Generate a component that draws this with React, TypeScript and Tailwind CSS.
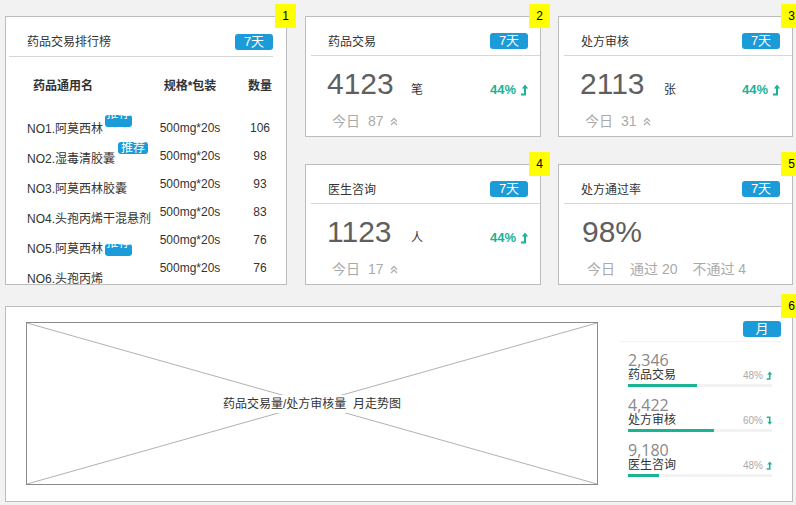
import React from "react";

const Tag = ({ children, className = "" }: { children: React.ReactNode; className?: string }) => (
  <span
    className={`inline-block h-[16px] w-[38px] rounded-[3px] bg-[#1b9bd7] text-center text-[13px] leading-[16px] text-white ${className}`}
  >
    {children}
  </span>
);

const Panel = ({
  n,
  className = "",
  children,
}: {
  n: string;
  className?: string;
  children: React.ReactNode;
}) => (
  <div className={`relative border border-[#bcbcbc] bg-white ${className}`}>
    {children}
    <div className="absolute -right-[10px] -top-[13px] flex h-[24px] w-[21px] items-center justify-center bg-[#ffff00] text-[12px] text-black">
      {n}
    </div>
  </div>
);

const LevelUp = ({ down = false, className = "" }: { down?: boolean; className?: string }) =>
  down ? (
    <svg viewBox="0 0 8 12" className={className} fill="none">
      <path d="M1 1.5H5V8" stroke="currentColor" strokeWidth="2" />
      <path d="M1.8 7.5L5 11.5L8.2 7.5Z" fill="currentColor" />
    </svg>
  ) : (
    <svg viewBox="0 0 8 12" className={className} fill="none">
      <path d="M1 10.5H5V4" stroke="currentColor" strokeWidth="2" />
      <path d="M1.8 4.5L5 0.5L8.2 4.5Z" fill="currentColor" />
    </svg>
  );

const Chevrons = () => (
  <svg viewBox="0 0 8 9" className="h-[9px] w-[8px] text-[#b0b0b0]" fill="none">
    <path d="M1 4.5L4 1.5L7 4.5" stroke="currentColor" strokeWidth="1.3" />
    <path d="M1 8L4 5L7 8" stroke="currentColor" strokeWidth="1.3" />
  </svg>
);

const StatHeader = ({ title }: { title: string }) => (
  <>
    <div className="mt-[16px] flex h-[16px] items-center justify-between pl-[22px] pr-[12px]">
      <span className="translate-y-[1px] text-[12px] leading-[16px] text-[#333]">{title}</span>
      <Tag>7天</Tag>
    </div>
    <div className="ml-[5px] mt-[6px] h-px bg-[#d7d7d7]" />
  </>
);

const StatCard = ({
  n,
  title,
  value,
  unit,
  today,
}: {
  n: string;
  title: string;
  value: string;
  unit: string;
  today: string;
}) => (
  <Panel n={n} className="h-[121px]">
    <StatHeader title={title} />
    <div className="mt-[13px] flex h-[30px] items-baseline pl-[21px] pr-[12px]">
      <span className="w-[84px] text-[30px] leading-[30px] text-[#5f5f5f]">{value}</span>
      <span className="text-[12px] text-[#333]">{unit}</span>
      <span className="ml-auto flex items-center gap-[4px] text-[13px] font-bold text-[#1ab394]">
        44%
        <LevelUp className="h-[12px] w-[8px]" />
      </span>
    </div>
    <div className="mt-[12px] flex h-[20px] items-center pl-[26px] text-[14px] text-[#aaa]">
      <span>今日</span>
      <span className="ml-[8px]">{today}</span>
      <span className="ml-[6px]">
        <Chevrons />
      </span>
    </div>
  </Panel>
);

const rankNames = [
  "NO1.阿莫西林",
  "NO2.湿毒清胶囊",
  "NO3.阿莫西林胶囊",
  "NO4.头孢丙烯干混悬剂",
  "NO5.阿莫西林",
  "NO6.头孢丙烯",
];
const rankCounts = ["106", "98", "93", "83", "76", "76"];

const monthly = [
  { value: "2,346", label: "药品交易", pct: 48, down: false, width: "48%" },
  { value: "4,422", label: "处方审核", pct: 60, down: true, width: "60%" },
  { value: "9,180", label: "医生咨询", pct: 48, down: false, width: "21.5%" },
];

export default function App() {
  return (
    <div className="relative h-[505px] w-[796px] overflow-hidden bg-[#f2f2f2] pl-[5px] pt-[16px] font-['Liberation_Sans','Noto_Sans_CJK_SC',sans-serif]">
      <div className="flex gap-[18px]">
        {/* ranking */}
        <Panel n="1" className="h-[269px] w-[282px]">
          <div className="h-full overflow-hidden">
            <div className="mt-[17px] flex h-[16px] items-center justify-between pl-[21px] pr-[13px]">
              <span className="text-[12px] leading-[16px] text-[#333]">药品交易排行榜</span>
              <Tag>7天</Tag>
            </div>
            <div className="ml-[3px] mr-[13px] mt-[6px] h-px bg-[#d7d7d7]" />
            <div className="mt-[19px] flex h-[20px] items-center pl-[21px] text-[12px] font-bold text-[#333]">
              <span className="w-[123px] pl-[6px]">药品通用名</span>
              <span className="w-[80px] text-center">规格*包装</span>
              <span className="ml-[10px] w-[40px] text-center">数量</span>
            </div>
            <div className="mt-[18px] flex pl-[21px] text-[12px] text-[#333]">
              <div className="w-[123px]">
                {rankNames.map((name, i) => (
                  <div key={i} className="relative h-[30px] whitespace-nowrap leading-[30px]">
                    {name}
                    {i === 0 && (
                      <span className="absolute left-[78px] top-[1px] h-[12px] w-[27px] rounded-[3px] bg-[#1b9bd7] text-center text-[12px] leading-[12px] text-white">
                        <span className="block -translate-y-[7px]">推荐</span>
                      </span>
                    )}
                    {i === 1 && (
                      <span className="absolute -top-[2px] left-[91px] h-[12px] w-[30px] rounded-[3px] bg-[#1b9bd7] text-center text-[12px] leading-[12px] text-white">
                        推荐
                      </span>
                    )}
                    {i === 4 && (
                      <span className="absolute left-[78px] top-[10px] h-[12px] w-[27px] rounded-[3px] bg-[#1b9bd7] text-center text-[12px] leading-[12px] text-white">
                        <span className="block -translate-y-[7px]">推荐</span>
                      </span>
                    )}
                  </div>
                ))}
              </div>
              <div className="w-[80px]">
                {rankCounts.map((_, i) => (
                  <div key={i} className="h-[28px] text-center leading-[28px]">
                    500mg*20s
                  </div>
                ))}
              </div>
              <div className="ml-[10px] w-[40px]">
                {rankCounts.map((c, i) => (
                  <div key={i} className="h-[28px] text-center leading-[28px]">
                    {c}
                  </div>
                ))}
              </div>
            </div>
          </div>
        </Panel>

        <div className="grid grid-cols-[236px_235px] gap-x-[17px] gap-y-[27px]">
          <StatCard n="2" title="药品交易" value="4123" unit="笔" today="87" />
          <StatCard n="3" title="处方审核" value="2113" unit="张" today="31" />
          <StatCard n="4" title="医生咨询" value="1123" unit="人" today="17" />
          <Panel n="5" className="h-[121px]">
            <StatHeader title="处方通过率" />
            <div className="mt-[13px] h-[30px] pl-[23px] text-[30px] leading-[30px] text-[#5f5f5f]">98%</div>
            <div className="mt-[12px] flex h-[20px] items-center gap-[15px] pl-[28px] text-[14px] text-[#aaa]">
              <span>今日</span>
              <span>通过 20</span>
              <span>不通过 4</span>
            </div>
          </Panel>
        </div>
      </div>

      {/* monthly trend */}
      <Panel n="6" className="mt-[21px] flex h-[196px] w-[788px]">
        <div className="relative ml-[20px] mt-[15px] flex h-[163px] w-[572px] items-center justify-center border border-[#8a8a8a]">
          <svg className="absolute inset-0 h-full w-full" preserveAspectRatio="none" viewBox="0 0 572 163">
            <line x1="0" y1="0" x2="572" y2="163" stroke="#b0b0b0" strokeWidth="1" />
            <line x1="0" y1="163" x2="572" y2="0" stroke="#b0b0b0" strokeWidth="1" />
          </svg>
          <span className="relative bg-white px-[2px] text-[12px] leading-[18px] text-[#333]">
            药品交易量/处方审核量&nbsp;&nbsp;月走势图
          </span>
        </div>
        <div className="ml-auto mr-[11px] flex w-[161px] flex-col">
          <Tag className="mt-[14px] h-[15px] self-end leading-[15px]">月</Tag>
          <div className="mt-[4px] h-px bg-[#f2f2f2]" />
          <div className="pl-[8px] pr-[9px]">
            {monthly.map((m) => (
              <div key={m.label} className="mt-[10px]">
                <div className="font-['Open_Sans',sans-serif] text-[16px] leading-[16px] text-[#888]">{m.value}</div>
                <div className="flex h-[14px] items-center justify-between">
                  <span className="text-[12px] leading-[14px] text-[#333]">{m.label}</span>
                  <span className="flex items-center gap-[3px] text-[10px] text-[#aaa]">
                    {m.pct}%
                    <LevelUp down={m.down} className="h-[9px] w-[6px] text-[#1ab394]" />
                  </span>
                </div>
                <div className="mt-[2px] h-[3px] bg-[#f2f2f2]">
                  <div className="h-full bg-[#1ab394]" style={{ width: m.width }} />
                </div>
              </div>
            ))}
          </div>
        </div>
      </Panel>
    </div>
  );
}
